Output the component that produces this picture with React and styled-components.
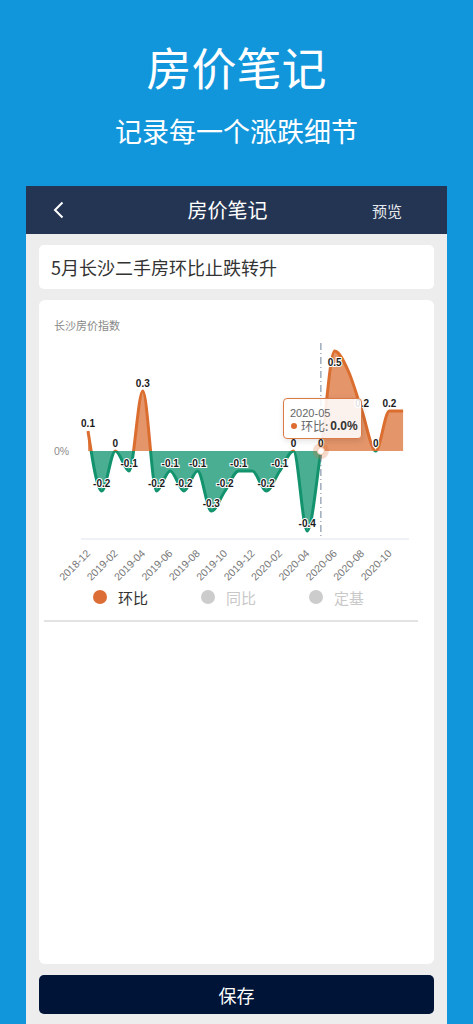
import React from 'react'
import styled, { createGlobalStyle } from 'styled-components'

const GlobalStyle = createGlobalStyle`
  html, body {
    margin: 0;
    padding: 0;
    background: #1296db;
  }
  body {
    font-family: "Noto Sans CJK SC", sans-serif;
  }
  * {
    box-sizing: border-box;
  }
`

const Page = styled.div`
  width: 473px;
  min-height: 1024px;
  display: flex;
  flex-direction: column;
  align-items: center;
  overflow: hidden;
`

const Hero = styled.header`
  height: 186px;
  padding-top: 44px;
  text-align: center;
  color: #fff;
`

const HeroTitle = styled.h1`
  margin: 0;
  font-size: 45px;
  line-height: 46px;
  font-weight: 400;
`

const HeroSub = styled.p`
  margin: 27px 0 0;
  font-size: 27px;
  line-height: 28px;
  font-weight: 400;
`

const Phone = styled.div`
  width: 421px;
  flex: 1;
  background: #ededed;
  display: flex;
  flex-direction: column;
`

const NavBar = styled.nav`
  height: 48px;
  background: #243553;
  display: grid;
  grid-template-columns: 1fr auto 1fr;
  align-items: center;
  padding: 0 45px 0 27px;
  color: #fff;
`

const BackButton = styled.span`
  justify-self: start;
  display: flex;
  align-items: center;
`

const NavTitle = styled.div`
  font-size: 20px;
  line-height: 24px;
`

const NavAction = styled.div`
  justify-self: end;
  font-size: 15px;
  color: #e6e9ee;
`

const Body = styled.main`
  padding: 11px 13px 10px;
  display: flex;
  flex-direction: column;
  gap: 11px;
`

const TitleField = styled.div`
  height: 44px;
  background: #fff;
  border-radius: 5px;
  display: flex;
  align-items: center;
  padding-left: 12px;
  font-size: 18px;
  color: #333;
`

const ChartCard = styled.section`
  height: 664px;
  background: #fff;
  border-radius: 6px;
  display: flex;
  flex-direction: column;
`

const ChartTitle = styled.div`
  height: 35px;
  padding: 19px 0 0 15px;
  font-size: 11px;
  line-height: 12px;
  color: #888;
`

const ChartArea = styled.div`
  position: relative;
  height: 240px;

  svg {
    display: block;
    overflow: visible;
  }
`

const Tooltip = styled.div`
  position: absolute;
  left: 244px;
  top: 63px;
  width: 79px;
  height: 41px;
  padding: 8px 0 0 6px;
  background: rgba(255, 255, 255, 0.88);
  border: 1px solid #dc7a45;
  border-radius: 4px;
  box-shadow: 1px 2px 6px rgba(0, 0, 0, 0.12);
  color: #666;
`

const TipDate = styled.div`
  font-family: "Liberation Sans", "Noto Sans CJK SC", sans-serif;
  font-size: 11px;
  line-height: 12px;
`

const TipRow = styled.div`
  display: flex;
  align-items: center;
  font-size: 12px;
  line-height: 14px;
`

const TipDot = styled.span`
  width: 6px;
  height: 6px;
  border-radius: 50%;
  background: #dc6d2e;
  margin: 0 4px 0 1px;
`

const TipValue = styled.b`
  font-family: "Liberation Sans", sans-serif;
  color: #333;
  margin-left: 2px;
`

const LegendRow = styled.div`
  display: flex;
  align-items: center;
  height: 20px;
  margin-top: 12px;
  padding-left: 54px;
`

const LegendItem = styled.div`
  width: 108px;
  display: flex;
  align-items: center;
  gap: 11px;
  font-size: 15px;
  color: ${({ active }) => (active ? '#333' : '#c8c8c8')};
`

const LegendDot = styled.span`
  width: 14px;
  height: 14px;
  border-radius: 50%;
  background: ${({ active }) => (active ? '#dc6d36' : '#cccccc')};
`

const Divider = styled.div`
  height: 2px;
  margin: 13px 16px 0 5px;
  background: #e2e2e2;
`

const SaveButton = styled.button`
  height: 39px;
  border: 0;
  border-radius: 5px;
  background: #001437;
  color: #fff;
  font-family: inherit;
  font-size: 18px;
`

// chart geometry (svg coordinates)
const X0 = 49
const DX = 13.7
const ZERO = 116
const SCALE = 200

const series = [
  { v: 0.1 }, { v: -0.2 }, { v: 0 }, { v: -0.1 }, { v: 0.3 }, { v: -0.2 },
  { v: -0.1 }, { v: -0.2 }, { v: -0.1 }, { v: -0.3 }, { v: -0.2 }, { v: -0.1 },
  { v: -0.1, hide: true }, { v: -0.2 }, { v: -0.1 }, { v: 0 }, { v: -0.4 }, { v: 0 },
  { v: 0.5, below: true }, { v: 0.4, hide: true }, { v: 0.2 }, { v: 0 }, { v: 0.2 },
  { v: 0.2, hide: true },
]

const months = [
  '2018-12', '2019-02', '2019-04', '2019-06', '2019-08', '2019-10',
  '2019-12', '2020-02', '2020-04', '2020-06', '2020-08', '2020-10',
]

const points = series.map((d, i) => [X0 + DX * i, ZERO - d.v * SCALE])

function monotonePath(pts) {
  const n = pts.length
  const t = new Array(n).fill(0)
  const sign = v => (v < 0 ? -1 : v > 0 ? 1 : 0)
  for (let i = 1; i < n - 1; i++) {
    const [x0, y0] = pts[i - 1]
    const [x1, y1] = pts[i]
    const [x2, y2] = pts[i + 1]
    const h0 = x1 - x0
    const h1 = x2 - x1
    const s0 = (y1 - y0) / h0
    const s1 = (y2 - y1) / h1
    const p = (s0 * h1 + s1 * h0) / (h0 + h1)
    t[i] = (sign(s0) + sign(s1)) * Math.min(Math.abs(s0), Math.abs(s1), 0.5 * Math.abs(p)) || 0
  }
  const slope2 = (a, b, tt) => (3 * (b[1] - a[1]) / (b[0] - a[0]) - tt) / 2
  t[0] = slope2(pts[0], pts[1], t[1])
  t[n - 1] = slope2(pts[n - 2], pts[n - 1], t[n - 2])
  let d = `M${pts[0][0]},${pts[0][1]}`
  for (let i = 0; i < n - 1; i++) {
    const [x0, y0] = pts[i]
    const [x1, y1] = pts[i + 1]
    const dx = (x1 - x0) / 3
    d += ` C${x0 + dx},${y0 + dx * t[i]} ${x1 - dx},${y1 - dx * t[i + 1]} ${x1},${y1}`
  }
  return d
}

const linePath = monotonePath(points)
const last = points[points.length - 1]
const areaPath = `${linePath} L${last[0]},${ZERO} L${points[0][0]},${ZERO} Z`
const pointerX = points[17][0]

const Chart = () => (
  <svg width="395" height="240" viewBox="0 0 395 240">
    <defs>
      <clipPath id="up">
        <rect x="0" y="0" width="395" height={ZERO} />
      </clipPath>
      <clipPath id="down">
        <rect x="0" y={ZERO} width="395" height={240 - ZERO} />
      </clipPath>
    </defs>
    <text x="15" y={ZERO + 4} fontSize="10.5" fill="#8c8c8c" fontFamily="Liberation Sans, sans-serif">
      0%
    </text>
    <g clipPath="url(#up)">
      <path d={areaPath} fill="#e4956a" />
      <path d={linePath} fill="none" stroke="#db6d2e" strokeWidth="3" strokeLinejoin="round" />
    </g>
    <g clipPath="url(#down)">
      <path d={areaPath} fill="#4aae93" />
      <path d={linePath} fill="none" stroke="#12936d" strokeWidth="3" strokeLinejoin="round" />
    </g>
    <line x1="42" x2="370" y1="204" y2="204" stroke="#dde3ee" strokeWidth="1" />
    <line
      x1={pointerX}
      x2={pointerX}
      y1="8"
      y2="204"
      stroke="#6f8098"
      strokeWidth="1"
      strokeDasharray="7 3 1 3"
    />
    {months.map((m, k) => {
      const x = X0 + DX * k * 2 + 3
      return (
        <text
          key={m}
          transform={`translate(${x},219) rotate(-45)`}
          textAnchor="end"
          fontSize="10.5"
          fill="#777"
          fontFamily="Liberation Sans, sans-serif"
        >
          {m}
        </text>
      )
    })}
    {series.map((d, i) =>
      d.hide ? null : (
        <text
          key={i}
          x={points[i][0]}
          y={points[i][1] + (d.below ? 15 : -4)}
          textAnchor="middle"
          fontSize="10"
          fontWeight="bold"
          fill="#1a1a1a"
          stroke="#fff"
          strokeWidth="2"
          paintOrder="stroke"
          fontFamily="Liberation Sans, sans-serif"
        >
          {d.v}
        </text>
      )
    )}
    <circle cx={pointerX} cy={ZERO} r="8" fill="#db6d2e" opacity="0.25" />
    <circle cx={pointerX} cy={ZERO} r="3.5" fill="#fff" stroke="#f2c4a8" strokeWidth="1" />
  </svg>
)

const App = () => (
  <Page>
    <GlobalStyle />
    <Hero>
      <HeroTitle>房价笔记</HeroTitle>
      <HeroSub>记录每一个涨跌细节</HeroSub>
    </Hero>
    <Phone>
      <NavBar>
        <BackButton>
          <svg width="12" height="18" viewBox="0 0 12 18">
            <polyline points="9.5,1.5 2,9 9.5,16.5" fill="none" stroke="#fff" strokeWidth="2" />
          </svg>
        </BackButton>
        <NavTitle>房价笔记</NavTitle>
        <NavAction>预览</NavAction>
      </NavBar>
      <Body>
        <TitleField>5月长沙二手房环比止跌转升</TitleField>
        <ChartCard>
          <ChartTitle>长沙房价指数</ChartTitle>
          <ChartArea>
            <Chart />
            <Tooltip>
              <TipDate>2020-05</TipDate>
              <TipRow>
                <TipDot />
                环比:
                <TipValue>0.0%</TipValue>
              </TipRow>
            </Tooltip>
          </ChartArea>
          <LegendRow>
            <LegendItem active>
              <LegendDot active />
              环比
            </LegendItem>
            <LegendItem>
              <LegendDot />
              同比
            </LegendItem>
            <LegendItem>
              <LegendDot />
              定基
            </LegendItem>
          </LegendRow>
          <Divider />
        </ChartCard>
        <SaveButton>保存</SaveButton>
      </Body>
    </Phone>
  </Page>
)

export default App
